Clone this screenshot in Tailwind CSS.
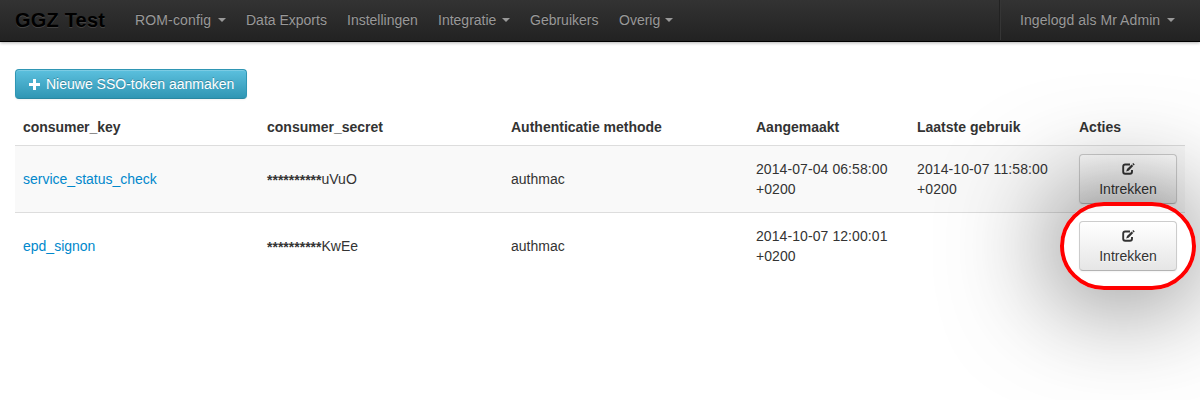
<!DOCTYPE html>
<html lang="nl">
<head>
<meta charset="utf-8">
<title>GGZ Test</title>
<script src="https://cdn.jsdelivr.net/npm/@tailwindcss/browser@4"></script>
</head>
<body class="h-[400px] w-[1200px] overflow-hidden bg-white font-['Liberation_Sans',Arial,sans-serif] text-sm/5 text-[#333]">
<svg class="hidden">
  <symbol id="edit" viewBox="0 0 13 12">
    <path d="M8 1.500H3.200Q1.200 1.500 1.200 3.500V8.800Q1.200 10.800 3.200 10.800H8Q10 10.800 10 8.800V7" fill="none" stroke="currentColor" stroke-width="1.900"/>
    <path d="M4.200 8.500L5 5.900L9.600 1.500L11.200 3.100L6.600 7.700ZM10.300 .9L11.200 0L12.700 1.500L11.800 2.400Z" fill="currentColor"/>
  </symbol>
</svg>
<header class="flex h-[42px] border-b border-black bg-linear-to-b from-[#333] to-[#222] pl-[15px] text-[#999] shadow-[0_1px_3px_rgba(0,0,0,0.3)] [text-shadow:0_-1px_0_rgba(0,0,0,0.25)]">
  <a class="w-[120px] pt-[10px] text-xl/5 font-bold tracking-[0.2px] text-black [text-shadow:0_1px_0_rgba(255,255,255,0.15)]"><span>GGZ Test</span></a>
  <nav class="flex flex-1 pt-[10px] whitespace-nowrap">
    <a class="flex w-[111px]"><span class="w-[83px] tracking-[0.15px]">ROM-config</span><i class="mt-2 h-0 border-x-4 border-t-4 border-x-transparent border-t-[#999]"></i></a>
    <a class="w-[101px]"><span>Data Exports</span></a>
    <a class="w-[91px]"><span>Instellingen</span></a>
    <a class="flex w-[92px]"><span class="w-[64px]">Integratie</span><i class="mt-2 h-0 border-x-4 border-t-4 border-x-transparent border-t-[#999]"></i></a>
    <a class="w-[89px]"><span>Gebruikers</span></a>
    <a class="flex"><span class="w-[46px]">Overig</span><i class="mt-2 h-0 border-x-4 border-t-4 border-x-transparent border-t-[#999]"></i></a>
  </nav>
  <div class="flex h-10 w-[201px] border-l border-[#222] whitespace-nowrap"><div class="flex flex-1 border-l border-[#353535] pt-[10px] pl-[19px]"><span class="w-[147px] tracking-[0.08px]">Ingelogd als Mr Admin</span><i class="mt-2 h-0 border-x-4 border-t-4 border-x-transparent border-t-[#999]"></i></div></div>
</header>
<main class="px-[15px] pt-[27px]">
  <button class="flex h-[30px] w-[232px] items-center rounded-[4px] border border-[#2f96b4] border-b-[#2a87a1] bg-linear-to-b from-[#5bc0de] to-[#2f96b4] pl-[13px] whitespace-nowrap text-white shadow-[inset_0_1px_0_rgba(255,255,255,0.2),0_1px_2px_rgba(0,0,0,0.05)] [text-shadow:0_-1px_0_rgba(0,0,0,0.25)]">
    <svg class="mr-[6px] size-[11px]" viewBox="0 0 11 11"><path d="M4 0H7V4H11V7H7V11H4V7H0V4H4Z" fill="#fff"/></svg><span>Nieuwe SSO-token aanmaken</span>
  </button>
  <table class="mt-[10px] w-[1170px] table-fixed border-collapse text-left">
    <colgroup><col class="w-[244px]"><col class="w-[244px]"><col class="w-[245px]"><col class="w-[161px]"><col class="w-[162px]"><col class="w-[114px]"></colgroup>
    <thead>
      <tr class="h-[36px] *:px-2 *:font-bold"><th><span class="tracking-[-0.05px]">consumer_key</span></th><th>consumer_secret</th><th>Authenticatie methode</th><th>Aangemaakt</th><th>Laatste gebruik</th><th>Acties</th></tr>
    </thead>
    <tbody>
      <tr class="h-[67px] border-t border-[#ddd] bg-[#f9f9f9] *:px-2">
        <td><a class="text-[#08c]">service_status_check</a></td><td><span class="inline-block translate-y-px font-bold">**********</span>uVuO</td><td>authmac</td><td class="tracking-[0.08px]">2014-07-04 06:58:00 +0200</td><td class="tracking-[0.1px]">2014-10-07 11:58:00 +0200</td>
        <td><button class="mt-px flex h-[50px] w-[98px] flex-col items-center rounded-[4px] border border-[#ccc] border-b-[#b3b3b3] bg-linear-to-b from-white to-[#e6e6e6] pt-[4px] shadow-[inset_0_1px_0_rgba(255,255,255,0.2),0_1px_2px_rgba(0,0,0,0.05)] [text-shadow:0_1px_1px_rgba(255,255,255,0.75)]"><svg class="mt-[4px] mb-[4px] h-[12px] w-[13px]"><use href="#edit"/></svg><span>Intrekken</span></button></td>
      </tr>
      <tr class="h-[67px] border-t border-[#ddd] *:px-2">
        <td><a class="text-[#08c]">epd_signon</a></td><td><span class="inline-block translate-y-px font-bold">**********</span>KwEe</td><td>authmac</td><td class="tracking-[0.08px]">2014-10-07 12:00:01 +0200</td><td></td>
        <td><button class="mt-px flex h-[50px] w-[98px] flex-col items-center rounded-[4px] border border-[#ccc] border-b-[#b3b3b3] bg-linear-to-b from-white to-[#e6e6e6] pt-[4px] shadow-[inset_0_1px_0_rgba(255,255,255,0.2),0_1px_2px_rgba(0,0,0,0.05)] [text-shadow:0_1px_1px_rgba(255,255,255,0.75)]"><svg class="mt-[4px] mb-[4px] h-[12px] w-[13px]"><use href="#edit"/></svg><span>Intrekken</span></button></td>
      </tr>
    </tbody>
  </table>
</main>
<div class="pointer-events-none absolute top-[202px] left-[1060px] h-[88px] w-[136px] rounded-[44px] border-4 border-[#f00] shadow-[-5px_0_112px_rgba(0,0,0,0.7)]"></div>
</body>
</html>
